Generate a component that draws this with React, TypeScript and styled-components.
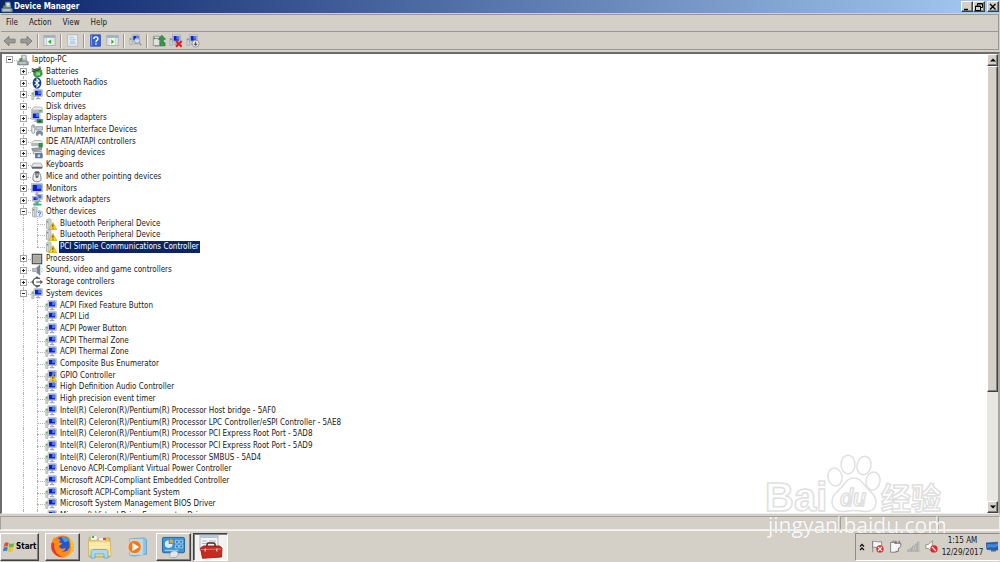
import React from 'react';
import styled, { createGlobalStyle, css } from 'styled-components';

const face = '#d4d0c8';
const uiFont = '"DejaVu Sans Condensed", "Liberation Sans", sans-serif';

const GlobalStyle = createGlobalStyle`
  *, *::before, *::after { box-sizing: border-box; }
  html, body { margin: 0; height: 100%; }
  body { background: ${face}; overflow: hidden; }
  #root { height: 100%; }
  button { font: inherit; color: inherit; padding: 0; margin: 0; }
`;

const raised = css`
  border: 1px solid;
  border-color: #ffffff #404040 #404040 #ffffff;
  box-shadow: inset -1px -1px 0 #808080;
`;

const Desktop = styled.div`
  position: relative;
  display: flex;
  flex-direction: column;
  height: 100vh;
  background: ${face};
  color: #181818;
  font-family: ${uiFont};
  font-size: 8px;
  line-height: 12px;
`;

const Window = styled.section`
  flex: 1;
  min-height: 0;
  display: flex;
  flex-direction: column;
`;

const TitleBar = styled.header`
  display: flex;
  align-items: center;
  height: 13px;
  flex: none;
  padding: 0 1px;
  background: linear-gradient(90deg, #0a246a, #a6caf0);
`;

const Title = styled.h1`
  flex: 1;
  margin: 0;
  padding-left: 1px;
  color: #ffffff;
  font-size: 8px;
  font-weight: 700;
`;

const WindowButtons = styled.div`
  display: flex;
`;

const WindowButton = styled.button<{ $apart?: boolean }>`
  ${raised}
  display: grid;
  place-items: center;
  width: 12px;
  height: 11px;
  margin-left: ${(p) => (p.$apart ? '2px' : '0')};
  background: ${face};
`;

const MenuBar = styled.nav`
  display: flex;
  align-items: center;
  gap: 11px;
  height: 17px;
  flex: none;
  margin: 1px 1px 0;
  padding: 0 5px;
  border: solid #9a9892;
  border-width: 1px 1px 0 0;
`;

const MenuItem = styled.button`
  border: 0;
  background: none;
`;

const Toolbar = styled.div`
  display: flex;
  align-items: center;
  height: 19px;
  flex: none;
  margin: 0 1px;
  border: solid #9a9892;
  border-width: 1px 1px 1px 0;
`;

const ToolButton = styled.button`
  display: grid;
  place-items: center;
  width: 17px;
  height: 16px;
  border: 0;
  background: none;
`;

const ToolDivider = styled.span`
  width: 2px;
  height: 14px;
  margin: 0 2px;
  border-left: 1px solid #9a9892;
  border-right: 1px solid #f2f0ec;
`;

const Pane = styled.main`
  flex: 1;
  min-height: 0;
  display: flex;
  margin-top: 2px;
  border: solid;
  border-width: 2px 2px 1px;
  border-color: #6c6c6c #a8a6a0 #efede8 #6c6c6c;
  background: #ffffff;
`;

const Tree = styled.ul`
  flex: 1;
  display: grid;
  grid-auto-rows: minmax(0, 1fr);
  height: 468px;
  margin: 0;
  padding: 0 0 0 1px;
  list-style: none;
`;

const TreeView = styled.div`
  flex: 1;
  min-width: 0;
  overflow: hidden;
`;

const TreeRow = styled.li`
  display: flex;
  align-items: center;
  min-height: 0;
`;

const Branch = styled.span<{ $line?: 'full' | 'half'; $arm?: boolean }>`
  position: relative;
  display: grid;
  align-items: center;
  align-self: stretch;
  width: 14px;
  padding-left: 3px;
  flex: none;

  &::before {
    content: '';
    position: absolute;
    top: 0;
    bottom: ${(p) => (p.$line === 'half' ? '50%' : '0')};
    left: 6px;
    display: ${(p) => (p.$line ? 'block' : 'none')};
    border-left: 1px dotted #b4b4b4;
  }

  &::after {
    content: '';
    position: absolute;
    top: 50%;
    left: 6px;
    right: 0;
    display: ${(p) => (p.$arm ? 'block' : 'none')};
    border-top: 1px dotted #b4b4b4;
  }
`;

const Expander = styled.button`
  position: relative;
  z-index: 1;
  display: grid;
  place-items: center;
  width: 7px;
  height: 7px;
  border: 1px solid #a4a4a4;
  background: #ffffff;
`;

const RowIcon = styled.span`
  display: grid;
  align-items: center;
  width: 14px;
  height: 12px;
  flex: none;
`;

const RowLabel = styled.span<{ $selected?: boolean }>`
  padding: 0 1px;
  line-height: 12px;
  white-space: nowrap;
  color: ${(p) => (p.$selected ? '#ffffff' : 'inherit')};
  background: ${(p) => (p.$selected ? '#0a246a' : 'none')};
`;

const ScrollBar = styled.div`
  display: flex;
  flex-direction: column;
  width: 11px;
  flex: none;
  background: #e9e7e3;
`;

const ScrollButton = styled.button`
  ${raised}
  display: grid;
  place-items: center;
  height: 12px;
  flex: none;
  background: ${face};
`;

const ScrollThumb = styled.div`
  ${raised}
  flex: 328;
  background: ${face};
`;

const ScrollTrack = styled.div`
  flex: 110;
`;

const StatusBar = styled.footer`
  display: grid;
  grid-template-columns: 1fr 97px 62px;
  gap: 1px;
  height: 16px;
  flex: none;
  padding: 2px 0 0;
`;

const StatusCell = styled.div`
  border: 1px solid;
  border-color: #a3a19b #efede8 #efede8 #a3a19b;
`;

const TaskBar = styled.footer`
  display: flex;
  align-items: center;
  height: 32px;
  flex: none;
  border-top: 1px solid #f6f5f2;
`;

const StartButton = styled.button`
  ${raised}
  display: flex;
  align-items: center;
  gap: 1px;
  width: 39px;
  height: 28px;
  margin-right: 6px;
  padding-left: 2px;
  background: ${face};
  color: #000000;
  font-weight: 700;
`;

const TaskButton = styled.button<{ $state?: 'open' | 'active' }>`
  display: grid;
  place-items: center;
  width: 35px;
  height: 28px;
  margin-right: 2px;
  border: 1px solid transparent;
  background: ${(p) => (p.$state === 'active' ? '#f4f3f0' : 'none')};
  ${(p) => p.$state === 'open' && raised}
  ${(p) =>
    p.$state === 'active' &&
    css`
      border-color: #404040 #ffffff #ffffff #404040;
      box-shadow: inset 1px 1px 0 #808080;
    `}
`;

const Tray = styled.div`
  display: flex;
  align-items: center;
  height: 28px;
  margin-left: auto;
  border: 1px solid;
  border-color: #8e8c87 transparent #ffffff #8e8c87;
`;

const trayWidths = { narrow: '12px', regular: '18px', edge: '14px' };

const TrayButton = styled.button<{ $width?: keyof typeof trayWidths }>`
  display: grid;
  place-items: center;
  width: ${(p) => trayWidths[p.$width ?? 'regular']};
  height: 20px;
  border: 0;
  background: none;
`;

const Clock = styled.time`
  width: 45px;
  text-align: center;
`;

const Watermark = styled.div`
  position: absolute;
  right: 54px;
  bottom: 20px;
  width: 180px;
  height: 88px;
  pointer-events: none;
`;

/* ---------- icons ---------- */

const Svg = ({ size = 12, children }: { size?: number; children: React.ReactNode }) => (
  <svg width={size} height={size} viewBox="0 0 16 16" aria-hidden="true">
    {children}
  </svg>
);

const Screen = ({ x = 4, y = 1, w = 11, h = 9 }) => (
  <>
    <rect x={x} y={y} width={w} height={h} fill="#d9dbe0" stroke="#9aa1af" strokeWidth=".8" />
    <rect x={x + 1.3} y={y + 1.3} width={w - 2.6} height={h - 2.6} fill="#0b1fd0" />
    <path d={`M${x + w / 2} ${y + 1.3}h${w / 2 - 1.3}v${h / 2}h-${w / 2 - 1.3}z`} fill="#4f7cea" />
    <path d={`M${x + w / 2 - 1} ${y + h}h2v2h2v1.5h-6v-1.500h2z`} fill="#a4a9b2" />
  </>
);

const Warning = () => (
  <>
    <path d="M10.5 6 15.800 15.500H5.200z" fill="#ffd41c" stroke="#c99a00" strokeWidth=".8" strokeLinejoin="round" />
    <path d="M9.900 8.800h1.300l-.2 3.600h-.9zM10 13.200h1.200v1.200H10z" fill="#222" />
  </>
);

const Tower = () => (
  <>
    <path d="M2 2.500 5 1l3 1v12l-3 1-3-1z" fill="#dcdfe1" stroke="#8a8f92" strokeWidth=".8" />
    <path d="M5 3v11" stroke="#9a9fa2" strokeWidth=".8" />
    <rect x="2.800" y="4" width="1.400" height="2" fill="#3fae3a" />
  </>
);

const Drive = ({ y = 6 }) => (
  <>
    <path d={`M1 ${y + 3}l3-3h9l3 3v4H1z`} fill="#eceded" stroke="#8b8e90" strokeWidth=".8" />
    <path d={`M1 ${y + 3.4}h14.600v3.400H1z`} fill="#b6b9bb" />
    <rect x="11" y={y + 4} width="3" height="2" fill="#43b53b" />
  </>
);

const icons: Record<string, React.ReactNode> = {
  root: (
    <>
      <path d="M6 1.500h6l1 7H6z" fill="#b9bfc3" stroke="#858c90" strokeWidth=".8" />
      <path d="M3 6 7 5v5H3z" fill="#4a9a50" />
      <path d="M1 9.500h13l1 1v4H1z" fill="#9fa7ac" stroke="#697176" strokeWidth=".9" />
      <path d="M8 3h3v3H8z" fill="#e4e8ea" />
      <path d="M3 12h9" stroke="#e8ecee" />
    </>
  ),
  battery: (
    <>
      <path d="M3 6.500c3-4 8-4 11-1l1 6c-3 4-9 4-11 1z" fill="#3ba63f" stroke="#1f6a28" strokeWidth=".8" />
      <path d="M1 3.500 8 6l5-3M1 6.500 6 8" stroke="#3b4144" strokeWidth="1.600" fill="none" />
      <path d="M7 8.500h5v4H7z" fill="#8fd985" />
      <path d="M10 .8h3v3h-3z" fill="#6f787c" />
    </>
  ),
  bluetooth: (
    <>
      <ellipse cx="8" cy="8" rx="5.800" ry="7.600" fill="#0b3f8c" />
      <path d="m4.800 5.200 6 5.600L8 13.300V2.700l2.800 2.500-6 5.600" stroke="#fff" strokeWidth="1.400" fill="none" />
    </>
  ),
  computer: (
    <>
      <path d="M1 5h3v9H1z" fill="#d0d4d6" stroke="#9a9fa2" strokeWidth=".7" />
      <rect x="1.400" y="5.500" width="1.800" height="1.800" fill="#3fae3a" />
      <Screen />
    </>
  ),
  disk: <Drive y={8} />,
  display: (
    <>
      <Screen x={1} y={0.6} w={11} h={9} />
      <path d="M8 10h7.500v4.500H8z" fill="#2e9a4a" stroke="#1a6a30" strokeWidth=".7" />
      <path d="M10 11.500h3v2h-3z" fill="#1f2e28" />
    </>
  ),
  hid: (
    <>
      <path d="M1 2.500c0-1.500 4-1.500 4 0v8c0 2.600-4 2.600-4 0z" fill="#eef0f2" stroke="#6f767b" strokeWidth=".9" />
      <path d="M3 1v4" stroke="#6f767b" />
      <path d="M6.500 3.500h9v4.500h-9z" fill="#c6ced5" stroke="#6d7984" strokeWidth=".8" />
      <path d="M7 15v-4l2-1.600h4L15.500 11v4h-2v-2h-4v2z" fill="#7b8fa6" stroke="#4e6075" strokeWidth=".6" />
    </>
  ),
  ide: (
    <>
      <Drive y={6} />
      <path d="M10.500 10h4.500v5h-4.500z" fill="#2f9b46" stroke="#1d6b30" strokeWidth=".7" />
    </>
  ),
  imaging: (
    <>
      <path d="m1 2 13-1v3L2 5z" fill="#9fa7ad" stroke="#5e666c" strokeWidth=".8" />
      <path d="M3 6h11v3H3z" fill="#dde2e6" stroke="#6e777d" strokeWidth=".8" />
      <path d="M6 9h9v5.500H6z" fill="#5d7fa6" stroke="#3d5570" strokeWidth=".8" />
      <circle cx="10.500" cy="11.800" r="1.900" fill="#c9dcf0" />
    </>
  ),
  keyboard: (
    <>
      <path d="M3 5.500h10l2.500 4.500-1 2.500h-13L.5 10z" fill="#e6e8ea" stroke="#8b9095" strokeWidth=".9" />
      <path d="M1 10.200h14l-.6 2.300h-13z" fill="#5d6368" />
    </>
  ),
  mouse: (
    <>
      <path d="M5.500 1C3 4 2.500 8 2.500 11c0 4 10.500 5 11 0 0-3-1-7-3-10z" fill="#eef0f1" stroke="#6a7074" strokeWidth="1.100" />
      <path d="M5.500 1h5L9.500 9h-3z" fill="#4a4f52" />
      <path d="M7.300 3h1.600v4H7.300z" fill="#d8dcde" />
    </>
  ),
  monitor: <Screen x={0.8} y={1} w={14.4} h={11} />,
  network: (
    <>
      <Screen x={7} y={0.5} w={8} h={6.5} />
      <Screen x={2} y={3} w={8} h={6.5} />
      <path d="M7 10h3v3h4v2.400H3V13h4z" fill="#27b36c" />
    </>
  ),
  other: (
    <>
      <Tower />
      <circle cx="11.200" cy="10.500" r="4.500" fill="#e8f0fa" stroke="#7f9cc4" strokeWidth=".8" />
      <path d="M9.600 9.400c0-2 3.200-2 3.200 0 0 1.200-1.600 1.200-1.600 2.400M11.200 12.600v1" stroke="#2a55b0" strokeWidth="1.200" fill="none" />
    </>
  ),
  unknown: (
    <>
      <Tower />
      <Warning />
    </>
  ),
  cpu: (
    <>
      <rect x="1" y="1" width="14" height="14" fill="#4a4a48" />
      <rect x="3" y="3" width="10" height="10" fill="#a9a9a4" stroke="#c8c8c2" strokeWidth="1" />
    </>
  ),
  sound: (
    <>
      <path d="M2 6h4l6-5v14l-6-5H2z" fill="#b9bfc4" stroke="#8a9297" strokeWidth=".8" />
      <path d="m8 4.500 4-3.500v14L8 11.500z" fill="#77828a" />
      <path d="M13.800 5c1.600 2 1.600 4 0 6" stroke="#9cc2ea" fill="none" />
    </>
  ),
  storage: (
    <>
      <path d="M12 3.800A5.600 5.600 0 1 0 12 12.200" fill="none" stroke="#55595b" strokeWidth="1.700" />
      <path d="m8 0 3 3.600H5zM8 16l3-3.600H5zM0 8l3.600-3v6zM16 8l-3.600-3v6z" fill="#55595b" />
      <path d="M7 8h6" stroke="#55595b" strokeWidth="1.500" />
    </>
  ),
  gpio: (
    <>
      <path d="M1 5h3v9H1z" fill="#d0d4d6" stroke="#9a9fa2" strokeWidth=".7" />
      <Screen />
      <Warning />
    </>
  ),
};

const Plus = ({ open }: { open: boolean }) => (
  <svg width="5" height="5" viewBox="0 0 5 5" aria-hidden="true">
    <path d={open ? 'M1 2.500h3' : 'M1 2.500h3M2.500 1v3'} stroke="#222" fill="none" />
  </svg>
);

const Triangle = ({ down }: { down?: boolean }) => (
  <svg width="6" height="4" viewBox="0 0 6 4" aria-hidden="true">
    <path d={down ? 'M0 .5h6L3 3.500z' : 'M0 3.500h6L3 .5z'} fill="#000" />
  </svg>
);

const Arrow = ({ forward }: { forward?: boolean }) => (
  <svg width="13" height="12" viewBox="0 0 14 12" aria-hidden="true">
    <path
      d={forward ? 'M13 6 7.500 1v3H1v4h6.500v3z' : 'M1 6l5.500-5v3H13v4H6.500v3z'}
      fill="#9b9a96"
      stroke="#7c7b78"
      strokeWidth="1"
    />
  </svg>
);

const PanelIcon = ({ flip }: { flip?: boolean }) => (
  <Svg size={13}>
    <rect x="1" y="2" width="14" height="12" fill="#e3e5e4" stroke="#a3acb3" />
    <path d="M1 2h14v2.800H1z" fill="#9db1c4" />
    <path d={flip ? 'M11 5v9' : 'M5 5v9'} stroke="#a7b0b8" />
    <path d="M5 5h6v8.500H5z" fill="#f4f6f4" />
    <path d={flip ? 'M6.500 6.500v6L10 9.500z' : 'M10 6.500v6L6 9.500z'} fill="#2fb52f" />
  </Svg>
);

const PropertiesIcon = () => (
  <Svg size={13}>
    <rect x="2" y="1" width="12.500" height="14" fill="#e9eef2" stroke="#a9b3bb" />
    <path d="M4 4h6M4 6.500h8.500M4 12h8.500" stroke="#a9c0d6" />
    <path d="M5 8h6v3H5z" fill="#bcd3e8" />
  </Svg>
);

const HelpIcon = () => (
  <Svg size={13}>
    <path d="M2 1h12v14H2z" fill="#3a62cf" stroke="#2c4ba8" />
    <path d="M3 1.500v13" stroke="#8fa9ee" />
    <path d="M6 6c0-3.200 5-3.200 5 0 0 1.900-2.500 1.900-2.500 4M8.500 11.500v1.700" stroke="#fff" strokeWidth="1.700" fill="none" />
  </Svg>
);

const SmallComputer = () => (
  <>
    <path d="M1 5h3v8H1z" fill="#d0d4d6" stroke="#9a9fa2" strokeWidth=".7" />
    <rect x="1.400" y="5.500" width="1.600" height="1.600" fill="#3fae3a" />
    <Screen x={4} y={1} w={9} h={8} />
  </>
);

const ScanIcon = () => (
  <Svg size={13}>
    <SmallComputer />
    <circle cx="10" cy="8" r="3.200" fill="#dbe8f5" fillOpacity=".85" stroke="#8f9aa5" />
    <path d="m12.300 10.400 2.700 3.600" stroke="#8f9aa5" strokeWidth="1.800" />
  </Svg>
);

const UpdateIcon = () => (
  <Svg size={14}>
    <path d="M1.500 2.500h7v11h-7z" fill="#dfe3e0" stroke="#8a918d" />
    <path d="M3 5h4M3 13.500h7" stroke="#7b827f" />
    <path d="M2 4h1.500v2H2z" fill="#2ea043" />
    <path d="M11.200 1.500 15.500 6h-2.600v4h2v3.500H9.500V10h.4V6H7z" fill="#2f9a50" stroke="#1f7038" strokeWidth=".8" />
  </Svg>
);

const UninstallIcon = () => (
  <Svg size={14}>
    <SmallComputer />
    <path d="m8 8 6.500 6.500M14.500 8 8 14.500" stroke="#e01b1b" strokeWidth="2.300" />
  </Svg>
);

const DisableIcon = () => (
  <Svg size={14}>
    <SmallComputer />
    <circle cx="11" cy="11" r="4" fill="#f2f2f2" stroke="#8f8f8f" />
    <path d="M11 8.500v4m-2-1.500 2 2 2-2" stroke="#555" strokeWidth="1.200" fill="none" />
  </Svg>
);

const WindowsFlag = () => (
  <svg width="12" height="12" viewBox="0 0 16 16" aria-hidden="true">
    <path d="M2 3c2-1.500 4-1.500 5.500-.5L6.500 7.500C5 6.600 3 6.700 1 8z" fill="#e8502a" />
    <path d="M8.500 3c2 1 4 1 6.500-.4L14 7.800c-2 1.200-4 1.300-6.400.2z" fill="#6db92d" />
    <path d="M.8 9c2-1.300 4-1.300 5.500-.4l-1 4.900C3.800 12.600 2 12.700 0 14z" fill="#2c7fd6" />
    <path d="M7.400 9c2 1 4 1 6.400-.2l-1 5c-2 1.200-4 1.200-6.400.2z" fill="#f6c21c" />
  </svg>
);

const Firefox = () => (
  <svg width="25" height="25" viewBox="0 0 26 26" aria-hidden="true">
    <circle cx="13" cy="13" r="11.500" fill="#ff7a1c" />
    <path d="M8 5c3-3 9-3 12 1 3 4 2 9-1 12-4 3-9 2-11-2z" fill="#2457c9" />
    <path d="M12 3c4-.5 7 1.500 8 4l-5 1.500z" fill="#3ba0ee" />
    <path
      d="M2.500 7c.7-2 1.500-3.500 2-4 .2 1.400.8 2.200 1.500 2.700 2-1 4 0 5 1-1 .4-1.500 1-1.500 2l3 .8c0 1.400-2 1.700-2.600 2.600-.5 1.200 0 2.400 1.600 3 2 .7 3.500-.6 5-.2 0 1.500-2.500 3-4.500 3 4 1.400 8-1 8.500-5 .3-3-.8-5.600-1.700-6.700 3 2 5 5 4.500 9-.8 5.500-5 8.800-10.300 8.800S1 20 1 13.500c0-2.500.7-4.600 1.500-6.500z"
      fill="#ff8a1a"
    />
    <path d="M18.500 2.500c4 2.500 6 6 6 10.500 0 6-5 11.500-11.500 11.500 5-1.500 9-5 9-10.500 0-4-1-8-3.500-11.500z" fill="#ffc62a" />
    <path d="M2 8.500c-2 6 1 12.500 7 15 2 .8 4 1 5 .9C7 22.500 3.500 16 4.500 10z" fill="#e5342c" />
  </svg>
);

const Explorer = () => (
  <svg width="25" height="25" viewBox="0 0 25 25" aria-hidden="true">
    <path d="M2 5V3.500h6L9.500 5H16l1-1h6v19H2z" fill="#e9c766" stroke="#c49c3d" strokeWidth=".7" />
    <path d="M4 2h6v4H4zM12 4h6v3h-6z" fill="#fdfdfd" stroke="#b9b9b9" strokeWidth=".4" />
    <path d="M5 2h2v2H5z" fill="#2fb44a" />
    <path d="M16 4h3v2h-3z" fill="#e24b32" />
    <path d="M1.500 7H23l1 15H2z" fill="#f8e59c" stroke="#d4b356" strokeWidth=".7" />
    <path d="M2 10h21M2 13h21" stroke="#fdf3c8" />
    <path d="M4 24v-6.500c0-1.200 1-2 2-2h13c1 0 2 .8 2 2V24h-4v-4H8v4z" fill="#a9d9ee" stroke="#5ea5c6" strokeWidth=".8" />
  </svg>
);

const MediaPlayer = () => (
  <svg width="22" height="22" viewBox="0 0 23 23" aria-hidden="true">
    <path d="M4 3 19 2l2.500 2v15L8 21l-4-1z" fill="#8cc2e4" stroke="#5d9cc7" strokeWidth=".8" />
    <path d="M4 3h14v17L4 20z" fill="#b4daf0" />
    <circle cx="9" cy="11.500" r="7" fill="#f07a1d" stroke="#f9d6b0" strokeWidth="1" />
    <path d="m6.800 7.200 7 4.300-7 4.300z" fill="#fff" />
  </svg>
);

const ControlPanel = () => (
  <svg width="25" height="24" viewBox="0 0 26 24" aria-hidden="true">
    <rect x="1.500" y="2" width="23" height="16" rx="1.500" fill="#3f92d2" stroke="#1f669f" />
    <path d="M8 5a4 4 0 1 0 4 4H8z" fill="#d9ecf9" />
    <path d="M9.300 4v3.700H13A4 4 0 0 0 9.300 4z" fill="#f3a531" />
    <path d="M15 5h3v3h-3zM19.500 5h3v3h-3zM15 10h3v3h-3zM19.500 10h3v3h-3z" fill="#2a76b6" stroke="#b9def5" strokeWidth=".8" />
    <path d="M4 15.500h14" stroke="#b9def5" />
    <path d="M9 21c0-3.500 2.500-5 5-5s4 1.500 4 3.500-2 3.500-5 3.500-4-.5-4-2z" fill="#e3e5e8" stroke="#8b9097" strokeWidth=".7" />
  </svg>
);

const Toolbox = () => (
  <svg width="25" height="25" viewBox="0 0 25 25" aria-hidden="true">
    <rect x="2" y="1" width="18" height="15" fill="#f3f5f8" stroke="#9fa8b4" strokeWidth=".8" />
    <path d="M2 1h18v3H2z" fill="#b7c7da" />
    <path d="M4 7h5M4 9.500h4M11 7h7" stroke="#a7b5c6" />
    <path d="M9 13V10.500c0-1 .7-1.500 1.500-1.500h5c.9 0 1.500.6 1.500 1.500V13" fill="none" stroke="#5b1712" strokeWidth="1.500" />
    <path d="m2.500 14 3-2h16l2.500 2-.5 9-19 1.300z" fill="#c92a20" stroke="#8b120c" strokeWidth=".8" />
    <path d="m3 15.500 20.500-.5" stroke="#e8746b" />
    <path d="M6.500 14.500H8v3H6.500zM18 14.500h1.500v3H18z" fill="#e0b9b2" />
  </svg>
);

const Forbidden = () => (
  <>
    <circle cx="11" cy="11" r="4.500" fill="#e02626" />
    <path d="m8.500 8.500 5 5" stroke="#fff" strokeWidth="1.500" />
  </>
);

const FlagIcon = () => (
  <Svg size={13}>
    <path d="M2 1v14M2 2c3-1.500 5 1.500 11 0v7c-5 1.500-8-1-11 0z" fill="#f7f7f7" stroke="#7f7f7f" />
    <Forbidden />
    <path d="m13.500 8.500-5 5" stroke="#fff" strokeWidth="1.500" />
  </Svg>
);

const PlugIcon = () => (
  <Svg size={13}>
    <path d="M2 3h7v12H2z" fill="#f7f7f7" stroke="#6f6f6f" />
    <path d="M4 1.500h3" stroke="#6f6f6f" />
    <path d="M6.500 4h8v3c0 2-1.500 3-3 3v4H8" fill="#f7f7f7" stroke="#5f5f5f" />
    <path d="M8.500 1v3M12.500 1v3" stroke="#5f5f5f" strokeWidth="1.300" />
  </Svg>
);

const SignalIcon = () => (
  <Svg size={13}>
    <path d="M1 14v-2h1.500v2zM4 14v-4h1.500v4zM7 14V7.500h1.500V14zM10 14V5h1.500v9zM13 14V2.500h1.500V14z" fill="#fafafa" stroke="#888" strokeWidth=".8" />
  </Svg>
);

const VolumeIcon = () => (
  <Svg size={13}>
    <path d="M1 5.500h3L9 1v14l-5-4.500H1z" fill="#f7f7f7" stroke="#8a8a8a" />
    <Forbidden />
  </Svg>
);

const Chevrons = () => (
  <svg width="6" height="8" viewBox="0 0 6 8" aria-hidden="true">
    <path d="m1 3.500 2-2 2 2M1 7l2-2 2 2" fill="none" stroke="#111" strokeWidth="1.300" />
  </svg>
);

const DesktopIcon = () => (
  <svg width="12" height="12" viewBox="0 0 12 12" aria-hidden="true">
    <path d="m0 2 12-.8V9L1 8.500z" fill="#1f62c0" stroke="#174280" strokeWidth=".6" />
    <path d="M1 3.500C4 2 8 5 12 2v3C8 8 4 5 1 7z" fill="#3f8ade" />
    <path d="M5 9h5v1.500H5z" fill="#5b6570" />
  </svg>
);

/* ---------- data ---------- */

type Node = { label: string; icon: string; level: 0 | 1 | 2; open?: boolean; leaf?: boolean; last?: boolean; selected?: boolean };

const category = (label: string, icon: string, open = false): Node => ({ label, icon, level: 1, open });
const device = (label: string, icon = 'computer', extra: Partial<Node> = {}): Node => ({ label, icon, level: 2, leaf: true, ...extra });

const nodes: Node[] = [
  { label: 'laptop-PC', icon: 'root', level: 0, open: true },
  category('Batteries', 'battery'),
  category('Bluetooth Radios', 'bluetooth'),
  category('Computer', 'computer'),
  category('Disk drives', 'disk'),
  category('Display adapters', 'display'),
  category('Human Interface Devices', 'hid'),
  category('IDE ATA/ATAPI controllers', 'ide'),
  category('Imaging devices', 'imaging'),
  category('Keyboards', 'keyboard'),
  category('Mice and other pointing devices', 'mouse'),
  category('Monitors', 'monitor'),
  category('Network adapters', 'network'),
  category('Other devices', 'other', true),
  device('Bluetooth Peripheral Device', 'unknown'),
  device('Bluetooth Peripheral Device', 'unknown'),
  device('PCI Simple Communications Controller', 'unknown', { last: true, selected: true }),
  category('Processors', 'cpu'),
  category('Sound, video and game controllers', 'sound'),
  category('Storage controllers', 'storage'),
  category('System devices', 'computer', true),
  device('ACPI Fixed Feature Button'),
  device('ACPI Lid'),
  device('ACPI Power Button'),
  device('ACPI Thermal Zone'),
  device('ACPI Thermal Zone'),
  device('Composite Bus Enumerator'),
  device('GPIO Controller', 'gpio'),
  device('High Definition Audio Controller'),
  device('High precision event timer'),
  device('Intel(R) Celeron(R)/Pentium(R) Processor Host bridge - 5AF0'),
  device('Intel(R) Celeron(R)/Pentium(R) Processor LPC Controller/eSPI Controller - 5AE8'),
  device('Intel(R) Celeron(R)/Pentium(R) Processor PCI Express Root Port - 5AD8'),
  device('Intel(R) Celeron(R)/Pentium(R) Processor PCI Express Root Port - 5AD9'),
  device('Intel(R) Celeron(R)/Pentium(R) Processor SMBUS - 5AD4'),
  device('Lenovo ACPI-Compliant Virtual Power Controller'),
  device('Microsoft ACPI-Compliant Embedded Controller'),
  device('Microsoft ACPI-Compliant System'),
  device('Microsoft System Management BIOS Driver'),
  device('Microsoft Virtual Drive Enumerator Driver'),
];

const TreeItem = ({ node }: { node: Node }) => (
  <TreeRow role="treeitem" aria-level={node.level + 1} aria-selected={!!node.selected} aria-expanded={node.leaf ? undefined : !!node.open}>
    {node.level > 0 && <Branch />}
    {node.level > 1 && <Branch $line="full" />}
    <Branch $line={node.level === 0 ? undefined : node.last ? 'half' : 'full'} $arm>
      {!node.leaf && (
        <Expander aria-label={`${node.open ? 'Collapse' : 'Expand'} ${node.label}`}>
          <Plus open={!!node.open} />
        </Expander>
      )}
    </Branch>
    <RowIcon>
      <Svg>{icons[node.icon]}</Svg>
    </RowIcon>
    <RowLabel $selected={node.selected}>{node.label}</RowLabel>
  </TreeRow>
);

const BaiduMark = () => (
  <svg width="180" height="88" viewBox="0 0 180 88" aria-hidden="true">
    <g fill="#ffffff" stroke="#e0e0e0" strokeWidth="1.500">
      <ellipse cx="69" cy="23" rx="7" ry="9" transform="rotate(-12 69 23)" />
      <ellipse cx="82" cy="10.500" rx="7" ry="9.300" />
      <ellipse cx="98" cy="11.500" rx="7" ry="9.300" transform="rotate(12 98 11.500)" />
      <ellipse cx="107" cy="27" rx="7" ry="9" transform="rotate(12 107 27)" />
      <path d="M88 24c7 0 9 6 13 10 5 5 9 8 9 14 0 7-5 9.500-10 9.500-4 0-8-1-12-1s-8 1-12 1c-6 0-10-4-10-10 0-6 4-8.500 9-13.500 4-4 6-10 13-10z" />
      <text x="-1" y="57" fontFamily="Liberation Sans, sans-serif" fontSize="40" fontWeight="700">Bai</text>
      <text x="74" y="52" fontFamily="Roboto, sans-serif" fontSize="24" fontWeight="500" fontStyle="italic">du</text>
      <text x="115" y="55" fontFamily="Noto Sans CJK SC, sans-serif" fontSize="30" fontWeight="700">经验</text>
    </g>
    <text x="2" y="79" fontFamily="Open Sans, sans-serif" fontSize="21" fill="#f8f8f7" stroke="#b9b6b0" strokeOpacity=".4" strokeWidth="1" paintOrder="stroke">
      jingyan.baidu.com
    </text>
  </svg>
);

export default function App() {
  return (
    <Desktop>
      <GlobalStyle />
      <Window>
        <TitleBar>
          <Svg>{icons.root}</Svg>
          <Title>Device Manager</Title>
          <WindowButtons>
            <WindowButton aria-label="Minimize">
              <svg width="8" height="8" viewBox="0 0 8 8"><path d="M1 6.500h4" stroke="#000" strokeWidth="1.500" /></svg>
            </WindowButton>
            <WindowButton aria-label="Restore">
              <svg width="8" height="8" viewBox="0 0 8 8"><path d="M2.500 2.500v-2h5v4H5.500M.5 3h5v4.500h-5zM.5 3.500h5M2.500 1h5" fill="none" stroke="#000" /></svg>
            </WindowButton>
            <WindowButton aria-label="Close" $apart>
              <svg width="8" height="8" viewBox="0 0 8 8"><path d="m1 1 5.500 5.500M6.500 1 1 6.500" stroke="#000" strokeWidth="1.300" /></svg>
            </WindowButton>
          </WindowButtons>
        </TitleBar>
        <MenuBar>
          <MenuItem>File</MenuItem>
          <MenuItem>Action</MenuItem>
          <MenuItem>View</MenuItem>
          <MenuItem>Help</MenuItem>
        </MenuBar>
        <Toolbar role="toolbar">
          <ToolButton aria-label="Back"><Arrow /></ToolButton>
          <ToolButton aria-label="Forward"><Arrow forward /></ToolButton>
          <ToolDivider />
          <ToolButton aria-label="Show console tree"><PanelIcon /></ToolButton>
          <ToolDivider />
          <ToolButton aria-label="Properties"><PropertiesIcon /></ToolButton>
          <ToolDivider />
          <ToolButton aria-label="Help"><HelpIcon /></ToolButton>
          <ToolButton aria-label="Show action pane"><PanelIcon flip /></ToolButton>
          <ToolDivider />
          <ToolButton aria-label="Scan for hardware changes"><ScanIcon /></ToolButton>
          <ToolDivider />
          <ToolButton aria-label="Update driver"><UpdateIcon /></ToolButton>
          <ToolButton aria-label="Uninstall"><UninstallIcon /></ToolButton>
          <ToolButton aria-label="Disable"><DisableIcon /></ToolButton>
        </Toolbar>
        <Pane>
          <TreeView>
            <Tree role="tree" aria-label="Devices">
              {nodes.map((node, i) => (
                <TreeItem key={i} node={node} />
              ))}
            </Tree>
          </TreeView>
          <ScrollBar>
            <ScrollButton aria-label="Scroll up"><Triangle /></ScrollButton>
            <ScrollThumb />
            <ScrollTrack />
            <ScrollButton aria-label="Scroll down"><Triangle down /></ScrollButton>
          </ScrollBar>
        </Pane>
        <StatusBar>
          <StatusCell />
          <StatusCell />
          <StatusCell />
        </StatusBar>
      </Window>
      <TaskBar>
        <StartButton><WindowsFlag />Start</StartButton>
        <TaskButton aria-label="Firefox" $state="open"><Firefox /></TaskButton>
        <TaskButton aria-label="Windows Explorer"><Explorer /></TaskButton>
        <TaskButton aria-label="Media Player"><MediaPlayer /></TaskButton>
        <TaskButton aria-label="Control Panel" $state="open"><ControlPanel /></TaskButton>
        <TaskButton aria-label="Device Manager" $state="active"><Toolbox /></TaskButton>
        <Tray>
          <TrayButton aria-label="Show hidden icons" $width="narrow"><Chevrons /></TrayButton>
          <TrayButton aria-label="Action Center"><FlagIcon /></TrayButton>
          <TrayButton aria-label="Power"><PlugIcon /></TrayButton>
          <TrayButton aria-label="Network"><SignalIcon /></TrayButton>
          <TrayButton aria-label="Volume"><VolumeIcon /></TrayButton>
          <Clock dateTime="2017-12-29T01:15">1:15 AM<br />12/29/2017</Clock>
          <TrayButton aria-label="Show desktop" $width="edge"><DesktopIcon /></TrayButton>
        </Tray>
      </TaskBar>
      <Watermark><BaiduMark /></Watermark>
    </Desktop>
  );
}
